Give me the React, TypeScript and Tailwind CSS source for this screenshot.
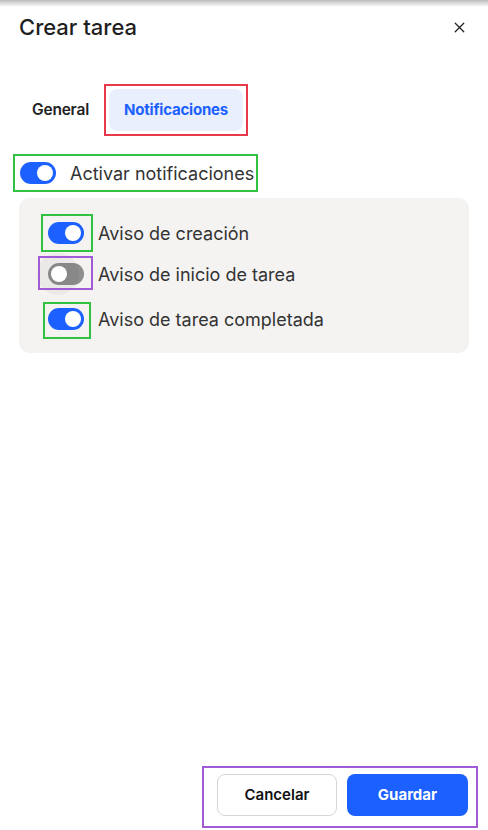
import React from 'react'
import { X } from 'lucide-react'

function Toggle({ on, ripple }: { on: boolean; ripple?: boolean }) {
    return (
        <div className={`relative w-[36px] h-[22px] rounded-full flex items-center px-[3px] ${on ? 'bg-[#1c61ff] justify-end' : 'bg-[#8e8e8e] justify-start'}`}>
            {ripple && (
                <div className="absolute left-[-11px] top-[-10px] w-[42px] h-[42px] rounded-full bg-black/[0.04]" />
            )}
            <div className="relative w-[16px] h-[16px] rounded-full bg-white" />
        </div>
    )
}

const rows = [
    { label: 'Aviso de creación', on: true, gap: 'mt-[24px]', box: 'border-[#31c23f] left-[-7px] top-[-8px] w-[52px] h-[38px]' },
    { label: 'Aviso de inicio de tarea', on: false, gap: 'mt-[19px]', box: 'border-[#a25bd6] left-[-10px] top-[-7px] w-[55px] h-[34px]' },
    { label: 'Aviso de tarea completada', on: true, gap: 'mt-[23px]', box: 'border-[#31c23f] left-[-5px] top-[-6px] w-[48px] h-[37px]' },
]

export default function App() {
    return (
        <div className="w-[488px] h-[830px] bg-white flex flex-col font-['Inter',sans-serif] text-[#333]">
            {/* top edge shadow */}
            <div className="h-[7px] bg-gradient-to-b from-[#bdbdbd] to-white" />

            <div className="flex items-center justify-between pl-[19px] pr-[20px] pt-[6px]">
                <h1 className="text-[22px] leading-[28px] text-[#1f1f1f] font-medium">Crear tarea</h1>
                <X size={17} strokeWidth={1.8} className="text-[#222]" />
            </div>

            <div className="flex items-center mt-[43px] ml-[32px]">
                <span className="text-[15.5px] font-semibold text-[#222] tracking-[-0.2px]">General</span>
                <div className="ml-[15px] w-[144px] h-[52px] border-2 border-[#e8394b] p-[3px]">
                    <div className="w-full h-full rounded-[8px] bg-[#e9effc] flex items-center justify-center text-[15px] font-bold text-[#1c61ff] tracking-[-0.2px]">
                        Notificaciones
                    </div>
                </div>
            </div>

            <div className="ml-[13px] mt-[18px] w-[245px] h-[38px] border-2 border-[#31c23f] flex items-center pl-[5px]">
                <Toggle on />
                <span className="ml-[14px] text-[18px]">Activar notificaciones</span>
            </div>

            <div className="mx-[19px] mt-[6px] h-[155px] rounded-[10px] bg-[#f4f3f2] flex flex-col pl-[29px]">
                {rows.map((r, i) => (
                    <div key={`row-${i}`} className={`flex items-center h-[22px] ${r.gap}`}>
                        <div className="relative w-[50px]">
                            <Toggle on={r.on} ripple={!r.on} />
                            <div className={`absolute border-2 ${r.box}`} />
                        </div>
                        <span className="text-[18px]">{r.label}</span>
                    </div>
                ))}
            </div>

            <div className="mt-auto mb-[2px] ml-[202px] w-[276px] h-[62px] border-2 border-[#a25bd6] flex items-start pt-[6px] pl-[13px] gap-[10px]">
                <button className="w-[120px] h-[42px] rounded-[8px] border border-[#d9d6d1] bg-white text-[15px] font-semibold text-[#111]">
                    Cancelar
                </button>
                <button className="w-[121px] h-[42px] rounded-[8px] bg-[#1c61ff] text-[15px] font-bold text-white">
                    Guardar
                </button>
            </div>
        </div>
    )
}
